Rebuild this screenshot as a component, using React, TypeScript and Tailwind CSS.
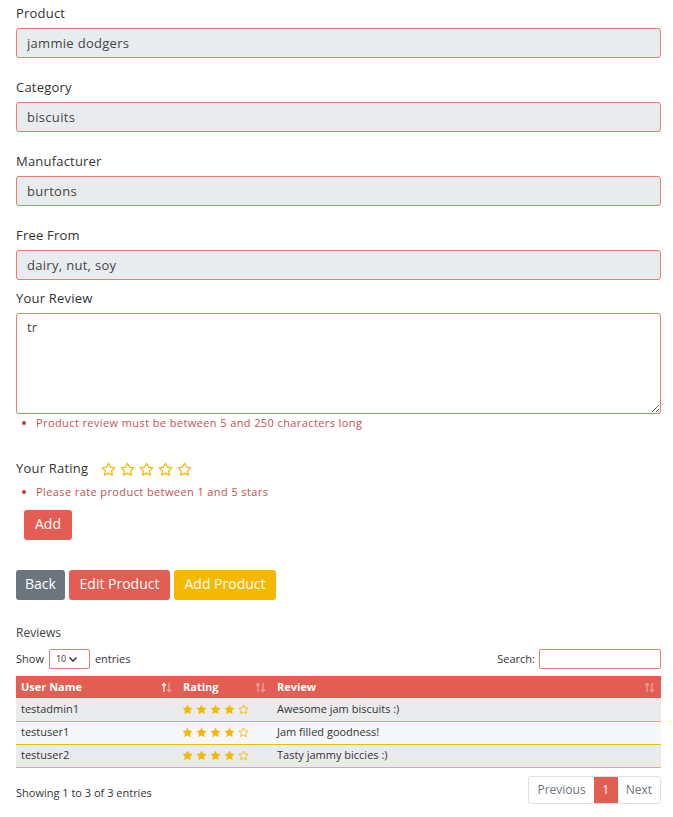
import React from "react";

const STAR =
  "M12 2l3.09 6.26L22 9.27l-5 4.87 1.18 6.88L12 17.77l-6.18 3.25L7 14.14 2 9.27l6.91-1.01L12 2z";

const Star = ({ filled, size }: { filled: boolean; size: number }) => (
  <svg
    width={size}
    height={size}
    viewBox="0 0 24 24"
    fill={filled ? "#f5b800" : "none"}
    stroke="#f5b800"
    strokeWidth={filled ? 1 : 2}
    strokeLinejoin="round"
  >
    <path d={STAR} />
  </svg>
);

// up/down sort arrows in the table header
const SortIcon = ({ active }: { active?: boolean }) => (
  <svg width="11" height="11" viewBox="0 0 11 11" fill="none" strokeWidth="1.3">
    <path d="M3 10V1.5M1 3.5L3 1.5 5 3.5" stroke={active ? "#ffffff" : "rgba(255,255,255,0.4)"} />
    <path d="M8 1v8.5M6 7.5L8 9.5 10 7.5" stroke="rgba(255,255,255,0.4)" />
  </svg>
);

const Field = ({ label, value, first }: { label: string; value: string; first?: boolean }) => (
  <div className={first ? "mt-[3px]" : "mt-[19px]"}>
    <label className="block h-[21px] leading-[21px] mb-[4px] text-[13px] text-[#333] tracking-[0.2px]">{label}</label>
    <input
      readOnly
      value={value}
      className="w-full h-[30px] px-[10px] rounded-[3px] border border-[#ee7a70] bg-[#e9ecef] text-[13px] tracking-[0.3px] text-[#444] outline-none"
    />
  </div>
);

const reviews = [
  { user: "testadmin1", rating: 4, text: "Awesome jam biscuits :)", bg: "bg-[#eaebed]" },
  { user: "testuser1", rating: 4, text: "Jam filled goodness!", bg: "bg-[#f6f7f8]" },
  { user: "testuser2", rating: 4, text: "Tasty jammy biccies :)", bg: "bg-[#eaebed]" },
];

export default function App() {
  return (
    <div className="w-[673px] min-h-[817px] bg-white px-4 font-['Open_Sans',sans-serif] text-[#333]">
      <div className="w-[645px]">
        <Field label="Product" value="jammie dodgers" first />
        <Field label="Category" value="biscuits" />
        <Field label="Manufacturer" value="burtons" />
        <Field label="Free From" value="dairy, nut, soy" />

        {/* Review text */}
        <div className="mt-[8px]">
          <label className="block h-[21px] leading-[21px] mb-[4px] text-[13px] tracking-[0.2px]">Your Review</label>
          <textarea
            readOnly
            value="tr"
            className="block w-full h-[101px] px-[10px] py-[4px] rounded-[3px] border border-[#ee7a70] bg-white text-[13px] text-[#444] outline-none"
          />
          <ul className="mt-[1px] pl-[6px] text-[11px] leading-[16px] tracking-[0.4px] text-[#c9504c]">
            <li className="flex items-center gap-[10px]">
              <span className="w-[4px] h-[4px] rounded-full bg-[#c0392b]" />
              Product review must be between 5 and 250 characters long
            </li>
          </ul>
        </div>

        {/* Rating */}
        <div className="mt-[27px] flex items-center h-[22px] text-[13px] tracking-[0.2px]">
          <span>Your Rating</span>
          <div className="ml-[13px] flex gap-[4px]">
            {[0, 1, 2, 3, 4].map((i) => (
              <Star key={i} filled={false} size={15} />
            ))}
          </div>
        </div>
        <ul className="mt-[4px] pl-[6px] text-[11px] leading-[16px] tracking-[0.4px] text-[#c9504c]">
          <li className="flex items-center gap-[10px]">
            <span className="w-[4px] h-[4px] rounded-full bg-[#c0392b]" />
            Please rate product between 1 and 5 stars
          </li>
        </ul>
        <button className="mt-[10px] ml-[8px] h-[30px] w-[48px] pb-[3px] rounded-[3px] bg-[#e35d52] text-white text-[14px]">
          Add
        </button>

        {/* Actions */}
        <div className="mt-[30px] flex gap-[4px]">
          <button className="h-[30px] w-[49px] pb-[3px] rounded-[3px] bg-[#6c757d] text-white text-[14px]">Back</button>
          <button className="h-[30px] w-[101px] pb-[3px] rounded-[3px] bg-[#e35d52] text-white text-[14px]">Edit Product</button>
          <button className="h-[30px] w-[102px] pb-[3px] rounded-[3px] bg-[#f5b800] text-white text-[14px]">Add Product</button>
        </div>

        {/* Reviews table */}
        <div className="mt-[22px] h-[21px] leading-[21px] text-[12px] text-[#444]">Reviews</div>
        <div className="mt-[6px] flex items-center justify-between h-[20px] text-[11px]">
          <div className="flex items-center gap-[5px]">
            <span>Show</span>
            <div className="w-[41px] h-[20px] rounded-[2px] border border-[#ee7a70] flex items-center pl-[6px] gap-[1px]">
              <span className="text-[9px]">10</span>
              <svg width="12" height="12" viewBox="0 0 24 24" fill="none" stroke="#333" strokeWidth="3">
                <path d="M5 9l7 7 7-7" />
              </svg>
            </div>
            <span>entries</span>
          </div>
          <div className="flex items-center gap-[4px]">
            <span>Search:</span>
            <input className="w-[122px] h-[20px] rounded-[2px] border border-[#ee7a70] outline-none" />
          </div>
        </div>

        <table className="mt-[7px] w-full border-collapse text-[11px]">
          <thead>
            <tr className="bg-[#e35d52] text-white h-[22px]">
              <th className="w-[162px] pl-[5px] pr-[6px] text-left font-bold">
                <div className="flex items-center justify-between">User Name<SortIcon active /></div>
              </th>
              <th className="w-[94px] pl-[5px] pr-[6px] text-left font-bold">
                <div className="flex items-center justify-between">Rating<SortIcon /></div>
              </th>
              <th className="pl-[5px] pr-[6px] text-left font-bold">
                <div className="flex items-center justify-between">Review<SortIcon /></div>
              </th>
            </tr>
          </thead>
          <tbody>
            {reviews.map((r) => (
              <tr key={r.user} className={`${r.bg} h-[23px] border-b border-[#f5b800]`}>
                <td className="pl-[5px]">{r.user}</td>
                <td className="pl-[4px]">
                  <div className="flex gap-[3px]">
                    {[0, 1, 2, 3, 4].map((i) => (
                      <Star key={i} filled={i < r.rating} size={11} />
                    ))}
                  </div>
                </td>
                <td className="pl-[5px]">{r.text}</td>
              </tr>
            ))}
          </tbody>
        </table>

        <div className="mt-[8px] flex items-center justify-between">
          <span className="text-[11px] mt-[8px]">Showing 1 to 3 of 3 entries</span>
          <div className="flex h-[28px] text-[12px] text-[#6c757d] border border-[#dee2e6] rounded-[3px] overflow-hidden">
            <span className="px-[8px] flex items-center">Previous</span>
            <span className="w-[24px] flex items-center justify-center bg-[#e35d52] text-white">1</span>
            <span className="px-[8px] flex items-center">Next</span>
          </div>
        </div>
      </div>
    </div>
  );
}
